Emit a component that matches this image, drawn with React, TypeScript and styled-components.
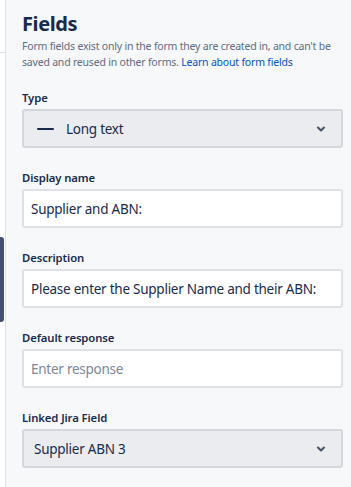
import React from "react";
import styled, { createGlobalStyle } from "styled-components";

const GlobalStyle = createGlobalStyle`
    html, body {
        margin: 0;
        padding: 0;
        background: #ffffff;
        font-family: "Noto Sans", "Open Sans", sans-serif;
    }
`;

const Page = styled.div`
    display: flex;
    width: 351px;
    height: 487px;
    overflow: hidden;
`;

const Gutter = styled.div`
    display: flex;
    flex-direction: column;
    width: 5px;
    flex-shrink: 0;
    background: #ffffff;
`;

const GutterLine = styled.div`
    margin-top: 52px;
    height: 1px;
    background: #dfe1e6;
`;

const Handle = styled.div`
    margin-top: 184px;
    width: 4px;
    height: 85px;
    background: #42526e;
    border-radius: 0 3px 3px 0;
`;

const Panel = styled.div`
    flex: 1;
    min-width: 0;
    background: #f7f8f9;
    border-left: 1px solid #dfe1e6;
    padding: 12px 8px 0 16px;
    box-sizing: border-box;
`;

const Title = styled.h2`
    margin: 0;
    font-size: 20px;
    line-height: 24px;
    font-weight: 700;
    color: #172b4d;
    letter-spacing: -0.4px;
`;

const Hint = styled.p`
    margin: 2px 0 0;
    font-size: 10.5px;
    line-height: 16px;
    letter-spacing: -0.2px;
    color: #5e6c84;
`;

const Link = styled.a`
    color: #0052cc;
    text-decoration: none;
`;

const Form = styled.div`
    display: flex;
    flex-direction: column;
    gap: 22px;
    margin-top: 20px;
`;

const Field = styled.div`
    display: flex;
    flex-direction: column;
    gap: 3px;
`;

const Label = styled.label`
    font-size: 11.3px;
    line-height: 16px;
    font-weight: 600;
    letter-spacing: -0.1px;
    color: #172b4d;
`;

const Box = styled.div<{ $select?: boolean }>`
    display: flex;
    align-items: center;
    height: 39px;
    box-sizing: border-box;
    padding: 0 14px 0 ${(p) => (p.$select ? "10px" : "7px")};
    border: 2px solid ${(p) => (p.$select ? "#d3d6dc" : "#dfe1e6")};
    border-radius: 3px;
    background: ${(p) => (p.$select ? "#ebecf0" : "#ffffff")};
    font-size: 13.5px;
    letter-spacing: -0.25px;
    color: #172b4d;
`;

const Value = styled.span<{ $placeholder?: boolean }>`
    flex: 1;
    min-width: 0;
    overflow: hidden;
    white-space: nowrap;
    color: ${(p) => (p.$placeholder ? "#7a869a" : "#172b4d")};
`;

const Dash = styled.span`
    width: 17px;
    height: 2px;
    flex-shrink: 0;
    background: #172b4d;
    margin: 0 12px 0 3px;
    border-radius: 1px;
`;

const Chevron = () => (
    <svg width="12" height="12" viewBox="0 0 12 12">
        <path d="M3 4.5 L6 7.5 L9 4.5" fill="none" stroke="#42526e" strokeWidth="2" strokeLinecap="round" strokeLinejoin="round" />
    </svg>
);

const App = () => {
    return (<Page>
        <GlobalStyle />
        <Gutter>
            <GutterLine />
            <Handle />
        </Gutter>
        <Panel>
            <Title>Fields</Title>
            <Hint>
                Form fields exist only in the form they are created in, and can't be saved and reused in other forms.{" "}
                <Link href="#">Learn about form fields</Link>
            </Hint>
            <Form>
                <Field>
                    <Label>Type</Label>
                    <Box $select>
                        <Dash />
                        <Value>Long text</Value>
                        <Chevron />
                    </Box>
                </Field>
                <Field>
                    <Label>Display name</Label>
                    <Box>
                        <Value>Supplier and ABN:</Value>
                    </Box>
                </Field>
                <Field>
                    <Label>Description</Label>
                    <Box>
                        <Value>Please enter the Supplier Name and their ABN:</Value>
                    </Box>
                </Field>
                <Field>
                    <Label>Default response</Label>
                    <Box>
                        <Value $placeholder>Enter response</Value>
                    </Box>
                </Field>
                <Field>
                    <Label>Linked Jira Field</Label>
                    <Box $select>
                        <Value>Supplier ABN 3</Value>
                        <Chevron />
                    </Box>
                </Field>
            </Form>
        </Panel>
    </Page>);
};

export default App;
